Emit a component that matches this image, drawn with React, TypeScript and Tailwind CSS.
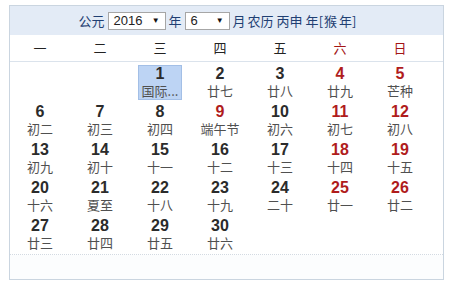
const weekdays = [
  { label: '一', red: false },
  { label: '二', red: false },
  { label: '三', red: false },
  { label: '四', red: false },
  { label: '五', red: false },
  { label: '六', red: true },
  { label: '日', red: true },
]

type Day = { n: number; lunar: string; red?: boolean; today?: boolean }

const days: (Day | null)[] = [
  null,
  null,
  { n: 1, lunar: '国际...', today: true },
  { n: 2, lunar: '廿七' },
  { n: 3, lunar: '廿八' },
  { n: 4, lunar: '廿九', red: true },
  { n: 5, lunar: '芒种', red: true },
  { n: 6, lunar: '初二' },
  { n: 7, lunar: '初三' },
  { n: 8, lunar: '初四' },
  { n: 9, lunar: '端午节', red: true },
  { n: 10, lunar: '初六' },
  { n: 11, lunar: '初七', red: true },
  { n: 12, lunar: '初八', red: true },
  { n: 13, lunar: '初九' },
  { n: 14, lunar: '初十' },
  { n: 15, lunar: '十一' },
  { n: 16, lunar: '十二' },
  { n: 17, lunar: '十三' },
  { n: 18, lunar: '十四', red: true },
  { n: 19, lunar: '十五', red: true },
  { n: 20, lunar: '十六' },
  { n: 21, lunar: '夏至' },
  { n: 22, lunar: '十八' },
  { n: 23, lunar: '十九' },
  { n: 24, lunar: '二十' },
  { n: 25, lunar: '廿一', red: true },
  { n: 26, lunar: '廿二', red: true },
  { n: 27, lunar: '廿三' },
  { n: 28, lunar: '廿四' },
  { n: 29, lunar: '廿五' },
  { n: 30, lunar: '廿六' },
]

const cjk = "font-['Microsoft_YaHei','Noto_Sans_CJK_SC',sans-serif]"

function FakeSelect({ value, width }: { value: string; width: string }) {
  return (
    <div
      className={`${width} h-[18px] mx-[3px] bg-white border border-[#a6a6a6] flex items-center justify-between pl-[5px] pr-[5px] text-[13px] leading-none text-[#222] font-['Liberation_Sans',Arial,sans-serif]`}
    >
      <span>{value}</span>
      <span className="text-[8px] text-[#111]">▼</span>
    </div>
  )
}

export default function App() {
  return (
    <div className="w-[451px] h-[285px] bg-white pt-[5px] pl-[9px]">
      <div className="w-[435px] h-[275px] border border-[#cad5e0] bg-white flex flex-col">
        {/* header */}
        <div
          className={`h-[29px] bg-[#e3ebf6] flex items-center justify-center pr-[18px] text-[13px] text-[#1f3f73] ${cjk}`}
        >
          <span>公元</span>
          <FakeSelect value="2016" width="w-[58px]" />
          <span>年</span>
          <FakeSelect value="6" width="w-[45px]" />
          <span>月</span>
          <span className="ml-[2px]">农历</span>
          <span className="ml-[3px]">丙申</span>
          <span className="ml-[3px]">年</span>
          <span>[</span>
          <span className="ml-[1px]">猴</span>
          <span className="ml-[2px]">年</span>
          <span>]</span>
        </div>

        {/* weekday labels */}
        <div className="h-[27px] border-b border-[#dbe3ec]">
          <div className={`w-[420px] h-full grid grid-cols-7 items-center text-[13px] ${cjk}`}>
            {weekdays.map((w) => (
              <div key={w.label} className={`text-center ${w.red ? 'text-[#a31515]' : 'text-[#222]'}`}>
                {w.label}
              </div>
            ))}
          </div>
        </div>

        {/* days */}
        <div className="w-[420px] grid grid-cols-7 auto-rows-[38px]">
          {days.map((d, i) =>
            d ? (
              <div key={i} className="flex justify-center">
                <div
                  className={`w-[44px] h-[35px] mt-[3px] flex flex-col items-center ${
                    d.today ? 'bg-[#bdd4f4] border border-[#a3bfe6]' : ''
                  }`}
                >
                  <span
                    className={`text-[16px] leading-[16px] font-bold font-['Liberation_Sans',Arial,sans-serif] ${
                      d.today ? 'mt-[0px]' : 'mt-[1px]'
                    } ${d.red ? 'text-[#b01c1c]' : 'text-[#2b2b2b]'}`}
                  >
                    {d.n}
                  </span>
                  <span className={`text-[13px] leading-[18px] text-[#505050] whitespace-nowrap ${cjk}`}>
                    {d.lunar}
                  </span>
                </div>
              </div>
            ) : (
              <div key={i} />
            )
          )}
        </div>

        <div className="mt-[2px] border-t border-dotted border-[#d3dae2]" />
        <div className="flex-1 bg-[#fcfdfe]" />
      </div>
    </div>
  )
}
